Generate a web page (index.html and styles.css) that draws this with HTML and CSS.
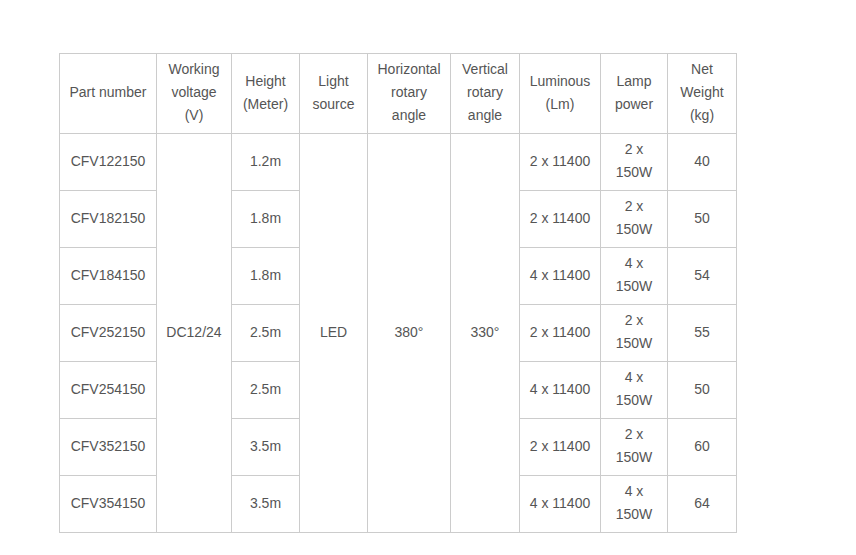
FILE: index.html
```html
<!DOCTYPE html>
<html>
<head>
<meta charset="utf-8">
<link rel="stylesheet" href="styles.css">
</head>
<body>
<div class="wrap">
<table class="spec">
<colgroup>
<col class="c1"><col class="c2"><col class="c3"><col class="c4"><col class="c5"><col class="c6"><col class="c7"><col class="c8"><col class="c9">
</colgroup>
<tr class="head">
<td>Part number</td><td>Working voltage (V)</td><td>Height (Meter)</td><td>Light source</td><td>Horizontal rotary angle</td><td>Vertical rotary angle</td><td>Luminous (Lm)</td><td>Lamp power</td><td>Net Weight (kg)</td>
</tr>
<tr><td>CFV122150</td><td rowspan="7">DC12/24</td><td>1.2m</td><td rowspan="7">LED</td><td rowspan="7">380°</td><td rowspan="7">330°</td><td>2 x 11400</td><td>2 x 150W</td><td>40</td></tr>
<tr><td>CFV182150</td><td>1.8m</td><td>2 x 11400</td><td>2 x 150W</td><td>50</td></tr>
<tr><td>CFV184150</td><td>1.8m</td><td>4 x 11400</td><td>4 x 150W</td><td>54</td></tr>
<tr><td>CFV252150</td><td>2.5m</td><td>2 x 11400</td><td>2 x 150W</td><td>55</td></tr>
<tr><td>CFV254150</td><td>2.5m</td><td>4 x 11400</td><td>4 x 150W</td><td>50</td></tr>
<tr><td>CFV352150</td><td>3.5m</td><td>2 x 11400</td><td>2 x 150W</td><td>60</td></tr>
<tr><td>CFV354150</td><td>3.5m</td><td>4 x 11400</td><td>4 x 150W</td><td>64</td></tr>
</table>
</div>
</body>
</html>
```
FILE: styles.css
```css
html, body {
  margin: 0;
  padding: 0;
  background: #ffffff;
}
.wrap {
  padding: 53px 0 0 59px;
}
.spec {
  border-collapse: collapse;
  table-layout: fixed;
  width: 677px;
  font-family: "Liberation Sans", Arial, sans-serif;
  font-size: 14px;
  line-height: 23px;
  color: #555555;
}
.spec td {
  border: 1px solid #cccccc;
  padding: 4px 5px 6px;
  text-align: center;
  vertical-align: middle;
}
.c1 { width: 97px; }
.c2 { width: 75px; }
.c3 { width: 68px; }
.c4 { width: 68px; }
.c5 { width: 83px; }
.c6 { width: 69px; }
.c7 { width: 81px; }
.c8 { width: 67px; }
.c9 { width: 69px; }
```
